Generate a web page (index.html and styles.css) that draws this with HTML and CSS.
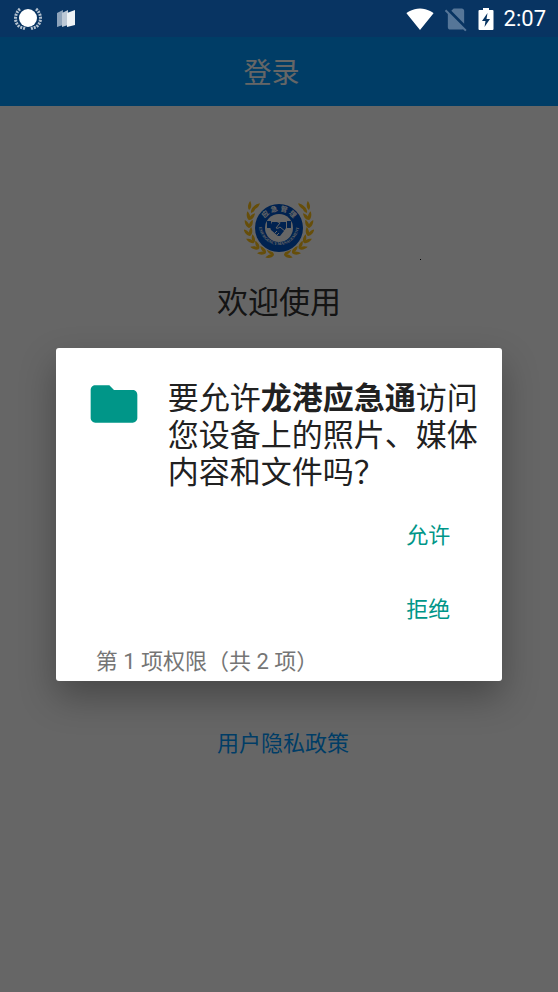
FILE: index.html
```
<!DOCTYPE html>
<html lang="zh-CN">
  <head>
    <meta charset="utf-8" />
    <meta name="viewport" content="width=device-width, initial-scale=1" />
    <title>登录</title>
    <link rel="stylesheet" href="styles.css">
  </head>
  <body>
    <div class="status-bar">
      <div class="status-left">
        <svg class="icon-emblem" viewBox="0 0 28 24" aria-hidden="true">
          <circle cx="14" cy="11" r="9" fill="#fff"/>
          <path d="M6 2C0 7 0 16 6 20L12 22M22 2C28 7 28 16 22 20L16 22" fill="none" stroke="#fff" stroke-width="3" stroke-dasharray="2 1" opacity=".7"/>
        </svg>
        <svg class="icon-map" viewBox="0 0 20 20" aria-hidden="true">
          <path d="M1 4L7 1V16L1 18Z" fill="#8ea3ba"/>
          <path d="M6 4L12 1V16L6 18Z" fill="#bdc9d6"/>
          <path d="M11 4L19 1V16L11 18Z" fill="#eef2f5"/>
        </svg>
      </div>
      <div class="status-right">
        <svg class="icon-status" viewBox="0 0 24 24" aria-hidden="true">
          <path d="M12 21.5L23.6 7C23.2 6.7 18.7 3 12 3S.8 6.7.4 7Z" fill="#fff"/>
        </svg>
        <svg class="icon-status" viewBox="0 0 24 24" aria-hidden="true">
          <path d="M19 5c0-1.100-.9-2-2-2h-7L8 5l11 11.100zM3.600 3.900L2.400 5.100 5 7.800V19c0 1.100.9 2 2 2h10c.4 0 .7-.1 1-.3l1.900 1.900 1.200-1.200z" fill="#567698"/>
        </svg>
        <svg class="icon-battery" viewBox="0 0 16 24" aria-hidden="true">
          <path d="M5 1h6v2h3.500q1 0 1 1v18q0 1-1 1h-13q-1 0-1-1V4q0-1 1-1H5z" fill="#fff"/>
          <path d="M9.500 6L4 14h3.500L6.500 20 12 12H8.500z" fill="#083462"/>
        </svg>
        <span class="time">2:07</span>
      </div>
    </div>

    <div class="screen">
      <header class="title-bar">登录</header>
      <main class="login">
        <div class="brand">
          <svg class="logo" viewBox="0 0 70 58" role="img" aria-label="应急管理">
            <defs>
              <path id="leaf" d="M0 0C-2-2.500-6-2-9 0C-6 2-2 2 0 0Z"/>
              <g id="pair">
                <use href="#leaf" transform="rotate(-24)"/>
                <use href="#leaf" transform="rotate(28)"/>
              </g>
              <g id="branch">
                <use href="#pair" transform="translate(30 55) rotate(8)"/>
                <use href="#pair" transform="translate(22 53) rotate(22)"/>
                <use href="#pair" transform="translate(15 49) rotate(38)"/>
                <use href="#pair" transform="translate(10 43) rotate(52)"/>
                <use href="#pair" transform="translate(6 36) rotate(70)"/>
                <use href="#pair" transform="translate(5 28) rotate(86)"/>
                <use href="#pair" transform="translate(5 20) rotate(104)"/>
                <use href="#leaf" transform="translate(7 13) rotate(122)"/>
                <use href="#leaf" transform="translate(5 10) rotate(98)"/>
                <use href="#leaf" transform="translate(9 9) rotate(140)"/>
              </g>
              <path id="ringTop" d="M18 28A17 17 0 0 1 52 28"/>
              <path id="ringBottom" d="M15 25A20 20 0 1 0 55 25"/>
            </defs>
            <g fill="#ffc21a">
              <use href="#branch"/>
              <use href="#branch" transform="matrix(-1 0 0 1 70 0)"/>
            </g>
            <circle cx="35" cy="28" r="25" fill="#fff"/>
            <circle cx="35" cy="28" r="24" fill="#0055c8"/>
            <circle cx="35" cy="28" r="14" fill="#fff"/>
            <text class="logo-cn" text-anchor="middle"><textPath href="#ringTop" startOffset="50%">应 急 管 理</textPath></text>
            <text class="logo-en" text-anchor="middle"><textPath href="#ringBottom" startOffset="50%">EMERGENCY MANAGEMENT</textPath></text>
            <g fill="#0055c8">
              <path d="M23 21h4v7h-4zM43 21h4v7h-4z"/>
              <path d="M28 22h5l2 1 2-1h5v6l-2 3-4 5-2 0-7-6-1-3z"/>
            </g>
            <path d="M36 23l-4 5q2 1 4-1l6 5M31 33l2-2M33 35l2-2" fill="none" stroke="#fff"/>
          </svg>
          <span class="speck"></span>
        </div>
        <h1>欢迎使用</h1>
        <a class="policy" href="#">用户隐私政策</a>
      </main>
    </div>

    <div class="overlay">
      <div class="dialog" role="dialog" aria-modal="true" aria-labelledby="question">
        <div class="dialog-body">
          <svg class="icon-folder" viewBox="0 0 24 24" aria-hidden="true">
            <path d="M10 4H4C2.900 4 2 4.900 2 6V18C2 19.100 2.900 20 4 20H20C21.100 20 22 19.100 22 18V8C22 6.900 21.100 6 20 6H12Z" fill="#009688"/>
          </svg>
          <h2 id="question">要允许<strong>龙港应急通</strong>访问您设备上的照片、媒体内容和文件吗？</h2>
        </div>
        <div class="actions">
          <button type="button">允许</button>
          <button type="button">拒绝</button>
        </div>
        <p class="counter">第 1 项权限（共 2 项）</p>
      </div>
    </div>
  </body>
</html>
```
FILE: styles.css
```
* {
  box-sizing: border-box;
}

body {
  margin: 0;
  min-height: 100vh;
  display: flex;
  flex-direction: column;
  background: #fff;
  font-family: Roboto, "Noto Sans CJK SC", sans-serif;
}

.status-bar {
  display: flex;
  justify-content: space-between;
  align-items: center;
  height: 37px;
  padding: 0 12px 0 14px;
  background: #083462;
  color: #fff;
}

.status-left,
.status-right {
  display: flex;
  align-items: center;
}

.status-left {
  gap: 14px;
}

.status-right {
  gap: 8px;
}

.icon-emblem {
  width: 28px;
  height: 24px;
}

.icon-map {
  width: 20px;
  height: 20px;
}

.icon-status {
  width: 28px;
  height: 28px;
}

.icon-battery {
  width: 16px;
  height: 24px;
}

.time {
  margin-left: 2px;
  font-size: 22px;
  line-height: 38px;
}

.screen {
  flex: 1;
  display: flex;
  flex-direction: column;
}

.title-bar {
  padding: 16px 15px 12px 0;
  background: #0099ff;
  color: #fff;
  font-size: 28px;
  line-height: 41px;
  text-align: center;
}

.login {
  display: flex;
  flex-direction: column;
  align-items: center;
  padding-top: 94px;
}

.brand {
  position: relative;
}

.logo {
  display: block;
  width: 70px;
  height: 58px;
}

.logo-cn {
  fill: #fff;
  font-size: 7px;
  font-weight: bold;
}

.logo-en {
  fill: #fff;
  font-family: "Liberation Serif", serif;
  font-size: 4px;
  font-weight: bold;
}

.speck {
  position: absolute;
  top: 59px;
  left: 176px;
  width: 1px;
  height: 1px;
  background: #000;
}

.login h1 {
  margin: 22px 0 0;
  color: #333;
  font-size: 31px;
  font-weight: 400;
  line-height: 46px;
}

.policy {
  margin-top: 403px;
  padding-left: 8px;
  color: #0099ff;
  font-size: 22px;
  line-height: 30px;
  text-decoration: none;
}

/* dims the page and centres the dialog below the status bar */
.overlay {
  position: absolute;
  top: 37px;
  right: 0;
  bottom: 0;
  left: 0;
  display: flex;
  align-items: center;
  justify-content: center;
  background: rgba(0, 0, 0, 0.6);
}

.dialog {
  width: 80%;
  border-radius: 3px;
  background: #fff;
  box-shadow: 0 16px 36px rgba(0, 0, 0, 0.3);
}

.dialog-body {
  display: flex;
  gap: 26px;
  padding: 28px 24px 5px 30px;
}

.icon-folder {
  flex: none;
  width: 56px;
  height: 56px;
}

.dialog h2 {
  margin: 4px 0 0;
  color: #212121;
  font-size: 31px;
  font-weight: 400;
  line-height: 37px;
}

.actions {
  display: flex;
  flex-direction: column;
  align-items: flex-end;
  padding-right: 40px;
}

.actions button {
  height: 74px;
  padding: 0 12px;
  border: none;
  background: none;
  color: #009688;
  font-family: inherit;
  font-size: 22px;
  cursor: pointer;
}

.counter {
  margin: 0;
  padding: 3px 40px 4px;
  color: #757575;
  font-size: 22px;
  line-height: 30px;
}
```
